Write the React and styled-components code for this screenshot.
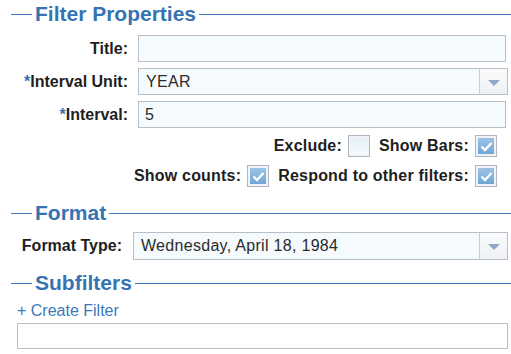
import styled, { createGlobalStyle } from "styled-components";

const GlobalStyle = createGlobalStyle`
  body {
    margin: 0;
    background: #ffffff;
    font-family: "Liberation Sans", Arial, sans-serif;
  }
`;

const Page = styled.div`
  width: 511px;
  padding-top: 2px;
  display: flex;
  flex-direction: column;
`;

const Heading = styled.div`
  display: flex;
  align-items: center;
  height: 24px;
  margin-bottom: ${({ $gap }) => $gap}px;
  padding-left: 11px;
`;

const Rule = styled.div`
  height: 1px;
  background: #3f78b3;
  width: ${({ $w }) => ($w ? `${$w}px` : "auto")};
  flex: ${({ $w }) => ($w ? "none" : "1")};
`;

const HeadingText = styled.span`
  padding: 0 3px;
  font-size: 21px;
  font-weight: bold;
  color: #3673b2;
  line-height: 24px;
`;

const FieldRow = styled.div`
  display: grid;
  grid-template-columns: ${({ $label }) => $label}px ${({ $width }) => $width}px;
  column-gap: ${({ $gap }) => $gap}px;
  align-items: center;
  margin-bottom: ${({ $mb }) => $mb}px;
`;

const Label = styled.label`
  text-align: right;
  font-size: 16px;
  font-weight: bold;
  color: #1e1e1e;
  white-space: nowrap;
`;

const Star = styled.span`
  color: #3673b2;
`;

const Input = styled.div`
  box-sizing: border-box;
  height: 27px;
  border: 1px solid #b8bfc9;
  background: #f5fafd;
  font-size: 16px;
  color: #2a2a2a;
  padding: 0 6px;
  display: flex;
  align-items: center;
`;

const Select = styled.div`
  box-sizing: border-box;
  height: ${({ $h }) => $h}px;
  border: 1px solid #b8bfc9;
  background: #f5fafd;
  display: flex;
  align-items: stretch;
`;

const SelectValue = styled.div`
  flex: 1;
  display: flex;
  align-items: center;
  padding-left: 7px;
  font-size: 16px;
  letter-spacing: 0.3px;
  color: #2a2a2a;
`;

const SelectButton = styled.div`
  width: 27px;
  border-left: 1px solid #c8ced6;
  background: linear-gradient(#fafbfc, #eef1f4);
  display: flex;
  align-items: center;
  justify-content: center;
`;

const Arrow = styled.div`
  width: 0;
  height: 0;
  border-left: 6px solid transparent;
  border-right: 6px solid transparent;
  border-top: 6px solid #8fa8c8;
  margin-top: 2px;
`;

const CheckRow = styled.div`
  display: flex;
  justify-content: flex-end;
  align-items: center;
  gap: 9px;
  padding-right: 14px;
  margin-bottom: ${({ $mb }) => $mb}px;
`;

const CheckItem = styled.div`
  display: flex;
  align-items: center;
  gap: 6px;
  font-size: 16px;
  letter-spacing: 0.2px;
  font-weight: bold;
  color: #1e1e1e;
`;

const Box = styled.div`
  box-sizing: border-box;
  width: 22px;
  height: 22px;
  border: 1px solid #aeb6c2;
  padding: 2px;
  background: #f1f3f6;
`;

const BoxInner = styled.div`
  width: 100%;
  height: 100%;
  display: flex;
  align-items: center;
  justify-content: center;
  background: ${({ $on }) =>
    $on
      ? "linear-gradient(#9cc3e6, #6fa6d6)"
      : "linear-gradient(#e2eef8, #f7fbfe)"};
`;

const Link = styled.div`
  padding-left: 17px;
  font-size: 16px;
  color: #3c79b8;
  line-height: 18px;
  margin-bottom: 3px;
`;

const Area = styled.div`
  box-sizing: border-box;
  margin-left: 17px;
  width: 491px;
  height: 26px;
  border: 1px solid #b8bfc9;
  background: #ffffff;
`;

const Check = ({ label, on }) => (
  <CheckItem>
    {label}
    <Box>
      <BoxInner $on={on}>
        {on && (
          <svg width="13" height="11" viewBox="0 0 13 11">
            <path
              d="M1.5 5.5 L5 9 L11.5 2"
              fill="none"
              stroke="#ffffff"
              strokeWidth="2.4"
            />
          </svg>
        )}
      </BoxInner>
    </Box>
  </CheckItem>
);

const Section = ({ title, gap }) => (
  <Heading $gap={gap}>
    <Rule $w={21} />
    <HeadingText>{title}</HeadingText>
    <Rule />
  </Heading>
);

export default function App() {
  return (
    <>
      <GlobalStyle />
      <Page>
        <Section title="Filter Properties" gap={9} />
        <FieldRow $label={128} $width={368} $gap={10} $mb={6}>
          <Label>Title:</Label>
          <Input />
        </FieldRow>
        <FieldRow $label={128} $width={370} $gap={10} $mb={6}>
          <Label>
            <Star>*</Star>Interval Unit:
          </Label>
          <Select $h={27}>
            <SelectValue>YEAR</SelectValue>
            <SelectButton>
              <Arrow />
            </SelectButton>
          </Select>
        </FieldRow>
        <FieldRow $label={128} $width={368} $gap={10} $mb={7}>
          <Label>
            <Star>*</Star>Interval:
          </Label>
          <Input>5</Input>
        </FieldRow>
        <CheckRow $mb={8}>
          <Check label="Exclude:" />
          <Check label="Show Bars:" on />
        </CheckRow>
        <CheckRow $mb={14}>
          <Check label="Show counts:" on />
          <Check label="Respond to other filters:" on />
        </CheckRow>
        <Section title="Format" gap={7} />
        <FieldRow $label={122} $width={375} $gap={11} $mb={11}>
          <Label>Format Type:</Label>
          <Select $h={28}>
            <SelectValue>Wednesday, April 18, 1984</SelectValue>
            <SelectButton>
              <Arrow />
            </SelectButton>
          </Select>
        </FieldRow>
        <Section title="Subfilters" gap={7} />
        <Link>+ Create Filter</Link>
        <Area />
      </Page>
    </>
  );
}
